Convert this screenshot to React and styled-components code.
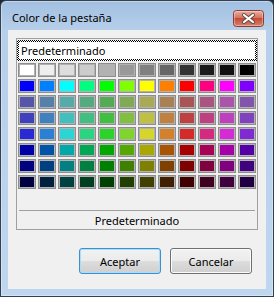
import React from "react";
import styled, { createGlobalStyle } from "styled-components";

const Global = createGlobalStyle`
  html, body { margin: 0; padding: 0; background: #1e2833; }
  body { font-family: "Noto Sans", "Open Sans", sans-serif; font-size: 11px; }
  * { box-sizing: border-box; }
`;

const Window = styled.div`
  width: 274px;
  height: 297px;
  border: 1px solid #34404d;
  border-radius: 6px 6px 0 0;
  background: linear-gradient(#a2c0e2 0px, #b6cfea 29px, #bfd6ef 100%);
  box-shadow: inset 0 0 0 1px rgba(255, 255, 255, 0.35);
  display: flex;
  flex-direction: column;
`;

const TitleBar = styled.div`
  height: 29px;
  flex: none;
  display: flex;
  align-items: flex-start;
  padding: 9px 9px 0 11px;
`;

const Title = styled.div`
  flex: 1;
  line-height: 15px;
  color: #000;
  white-space: nowrap;
`;

const CloseBtn = styled.div`
  width: 31px;
  height: 17px;
  flex: none;
  display: flex;
`;

const Client = styled.div`
  margin: 0 7px;
  height: 259px;
  background: #f0f0f0;
  display: flex;
  flex-direction: column;
  padding: 8px 14px 0 8px;
`;

const ListBox = styled.div`
  width: 242px;
  height: 192px;
  border: 1px solid #a0a0a0;
  display: flex;
  flex-direction: column;
`;

const FocusField = styled.div`
  margin-top: 1px;
  height: 21px;
  padding: 2px;
  background: repeating-conic-gradient(#000 0% 25%, #fff 0% 50%) 0 0 / 2px 2px;
`;

const FieldInner = styled.div`
  height: 100%;
  background: #fff;
  padding: 1px 0 0 2px;
  line-height: 15px;
  color: #000;
`;

const Grid = styled.div`
  margin: 2px 1px 0 1px;
  display: grid;
  grid-template-columns: repeat(12, 18px);
  grid-auto-rows: 14px;
  gap: 2px;
`;

const Swatch = styled.div`
  border: 1px solid #8e8e8e;
  box-shadow: inset 0 0 0 1px #b2b2b2;
  background: ${(p) => p.$color};
`;

const Divider = styled.div`
  margin: 21px 2px 0 2px;
  height: 1px;
  background: #a0a0a0;
`;

const DefaultLabel = styled.div`
  height: 18px;
  display: flex;
  align-items: center;
  justify-content: center;
  line-height: 15px;
  color: #000;
`;

const ButtonRow = styled.div`
  margin-top: 18px;
  display: flex;
  justify-content: flex-end;
  gap: 9px;
`;

const Button = styled.button`
  width: 82px;
  height: 26px;
  padding: 0;
  font-family: inherit;
  font-size: 11px;
  line-height: 15px;
  color: #000;
  border: 1px solid ${(p) => (p.$default ? "#3c8fd0" : "#707070")};
  border-radius: 3px;
  background: linear-gradient(#f2f2f2 0%, #ebebeb 50%, #dddddd 51%, #cfcfcf 100%);
  box-shadow: inset 0 0 0 1px ${(p) => (p.$default ? "#a9def7" : "#fbfbfb")};
`;

const hues = [240, 210, 180, 150, 120, 90, 60, 30, 0, 330, 300, 270];
const grays = [
  "#ffffff", "#eeeeee", "#dddddd", "#cccccc", "#b2b2b2", "#999999",
  "#808080", "#666666", "#333333", "#1c1c1c", "#111111", "#000000",
];
const rowSpecs = [
  [100, 50],
  [33, 50],
  [50, 50],
  [67, 50],
  [100, 33],
  [100, 25],
  [100, 12.5],
];
const palette = [
  ...grays,
  ...rowSpecs.flatMap(([s, l]) => hues.map((h) => `hsl(${h}, ${s}%, ${l}%)`)),
];

function CloseIcon() {
  return (
    <svg width="31" height="17" viewBox="0 0 31 17">
      <defs>
        <linearGradient id="cg" x1="0" y1="0" x2="0" y2="1">
          <stop offset="0" stopColor="#eab2a5" />
          <stop offset="0.45" stopColor="#d7735f" />
          <stop offset="0.5" stopColor="#c54a36" />
          <stop offset="1" stopColor="#d9846f" />
        </linearGradient>
      </defs>
      <rect x="0.5" y="0.5" width="30" height="16" rx="3" fill="url(#cg)" stroke="#8b3b30" />
      <rect x="1.5" y="1.5" width="28" height="14" rx="2" fill="none" stroke="rgba(255,255,255,0.35)" />
      <path d="M11 5 L20 12 M20 5 L11 12" stroke="#5b4a48" strokeWidth="4" strokeLinecap="round" />
      <path d="M11 5 L20 12 M20 5 L11 12" stroke="#ffffff" strokeWidth="2.2" strokeLinecap="round" />
    </svg>
  );
}

export default function App() {
  return (
    <>
      <Global />
      <Window>
        <TitleBar>
          <Title>Color de la pestaña</Title>
          <CloseBtn>
            <CloseIcon />
          </CloseBtn>
        </TitleBar>
        <Client>
          <ListBox>
            <FocusField>
              <FieldInner>Predeterminado</FieldInner>
            </FocusField>
            <Grid>
              {palette.map((c, i) => (
                <Swatch key={i} $color={c} />
              ))}
            </Grid>
            <Divider />
            <DefaultLabel>Predeterminado</DefaultLabel>
          </ListBox>
          <ButtonRow>
            <Button $default>Aceptar</Button>
            <Button>Cancelar</Button>
          </ButtonRow>
        </Client>
      </Window>
    </>
  );
}
